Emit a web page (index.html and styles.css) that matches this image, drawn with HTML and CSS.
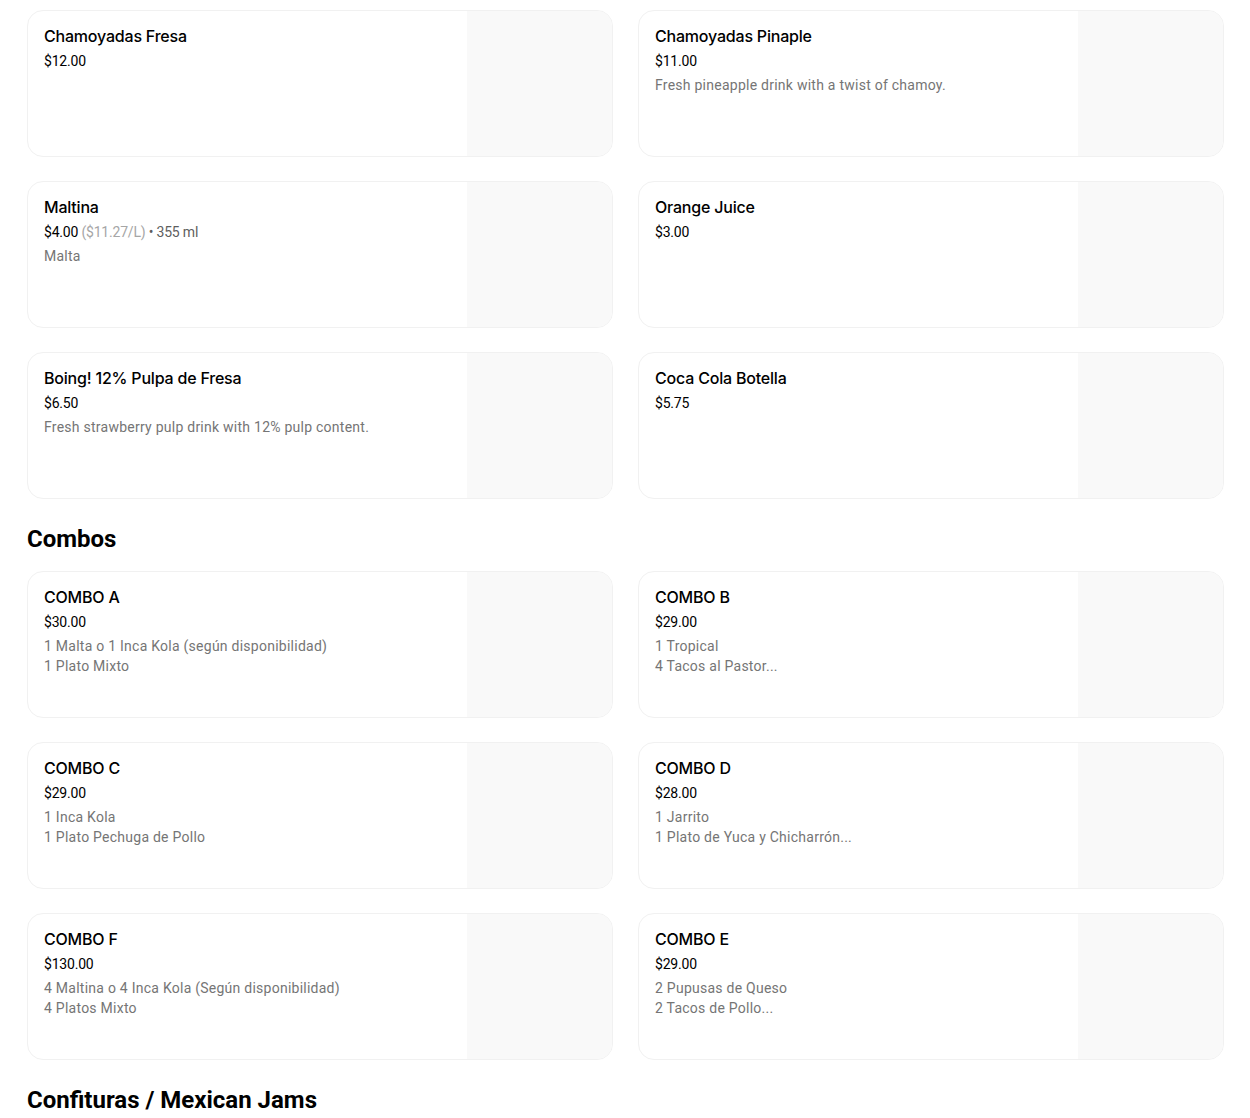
FILE: index.html
```html
<!DOCTYPE html>
<html lang="en">
<head>
<meta charset="utf-8">
<title>Menu</title>
<link rel="stylesheet" href="styles.css">
</head>
<body>
<main class="menu">
  <div class="grid">
    <div class="card">
      <div class="info">
        <div class="name">Chamoyadas Fresa</div>
        <div class="price">$12.00</div>
      </div>
      <div class="thumb"></div>
    </div>
    <div class="card">
      <div class="info">
        <div class="name">Chamoyadas Pinaple</div>
        <div class="price">$11.00</div>
        <div class="desc">Fresh pineapple drink with a twist of chamoy.</div>
      </div>
      <div class="thumb"></div>
    </div>
    <div class="card">
      <div class="info">
        <div class="name">Maltina</div>
        <div class="price">$4.00 <span class="unit">($11.27/L)</span> <span class="size">• 355 ml</span></div>
        <div class="desc">Malta</div>
      </div>
      <div class="thumb"></div>
    </div>
    <div class="card">
      <div class="info">
        <div class="name">Orange Juice</div>
        <div class="price">$3.00</div>
      </div>
      <div class="thumb"></div>
    </div>
    <div class="card">
      <div class="info">
        <div class="name">Boing! 12% Pulpa de Fresa</div>
        <div class="price">$6.50</div>
        <div class="desc">Fresh strawberry pulp drink with 12% pulp content.</div>
      </div>
      <div class="thumb"></div>
    </div>
    <div class="card">
      <div class="info">
        <div class="name">Coca Cola Botella</div>
        <div class="price">$5.75</div>
      </div>
      <div class="thumb"></div>
    </div>
  </div>

  <h2 class="section-title">Combos</h2>
  <div class="grid">
    <div class="card">
      <div class="info">
        <div class="name">COMBO A</div>
        <div class="price">$30.00</div>
        <div class="desc">1 Malta o 1 Inca Kola (según disponibilidad)<br>1 Plato Mixto</div>
      </div>
      <div class="thumb"></div>
    </div>
    <div class="card">
      <div class="info">
        <div class="name">COMBO B</div>
        <div class="price">$29.00</div>
        <div class="desc">1 Tropical<br>4 Tacos al Pastor...</div>
      </div>
      <div class="thumb"></div>
    </div>
    <div class="card">
      <div class="info">
        <div class="name">COMBO C</div>
        <div class="price">$29.00</div>
        <div class="desc">1 Inca Kola<br>1 Plato Pechuga de Pollo</div>
      </div>
      <div class="thumb"></div>
    </div>
    <div class="card">
      <div class="info">
        <div class="name">COMBO D</div>
        <div class="price">$28.00</div>
        <div class="desc">1 Jarrito<br>1 Plato de Yuca y Chicharrón...</div>
      </div>
      <div class="thumb"></div>
    </div>
    <div class="card">
      <div class="info">
        <div class="name">COMBO F</div>
        <div class="price">$130.00</div>
        <div class="desc">4 Maltina o 4 Inca Kola (Según disponibilidad)<br>4 Platos Mixto</div>
      </div>
      <div class="thumb"></div>
    </div>
    <div class="card">
      <div class="info">
        <div class="name">COMBO E</div>
        <div class="price">$29.00</div>
        <div class="desc">2 Pupusas de Queso<br>2 Tacos de Pollo...</div>
      </div>
      <div class="thumb"></div>
    </div>
  </div>

  <h2 class="section-title">Confituras / Mexican Jams</h2>
</main>
</body>
</html>
```

FILE: styles.css
```css
* {
  box-sizing: border-box;
}

html, body {
  margin: 0;
  padding: 0;
  background: #ffffff;
}

body {
  font-family: Roboto, "Liberation Sans", sans-serif;
  color: #000000;
}

.menu {
  padding: 10px 26px 0 27px;
}

.grid {
  display: grid;
  grid-template-columns: 586px 586px;
  column-gap: 25px;
  row-gap: 24px;
}

.card {
  display: flex;
  height: 147px;
  border: 1px solid #f1f1f1;
  border-radius: 16px;
  overflow: hidden;
  background: #ffffff;
}

.info {
  flex: 1;
  padding: 13px 16px 0 16px;
}

.name {
  font-family: Inter, Roboto, sans-serif;
  font-size: 16px;
  line-height: 24px;
  font-weight: 500;
  letter-spacing: -0.2px;
  color: #000000;
}

.price {
  margin-top: 3px;
  font-size: 14px;
  line-height: 20px;
  letter-spacing: -0.2px;
  color: #000000;
}

.unit {
  color: #a6a6a6;
}

.size {
  color: #5e5e5e;
}

.desc {
  margin-top: 4px;
  font-size: 14px;
  line-height: 20px;
  letter-spacing: 0.25px;
  color: #757575;
}

.thumb {
  width: 145px;
  flex: none;
  background: #f9f9f9;
}

.section-title {
  margin: 24px 0 16px 0;
  font-size: 24px;
  line-height: 32px;
  font-weight: 700;
  letter-spacing: 0;
  color: #000000;
}
```
